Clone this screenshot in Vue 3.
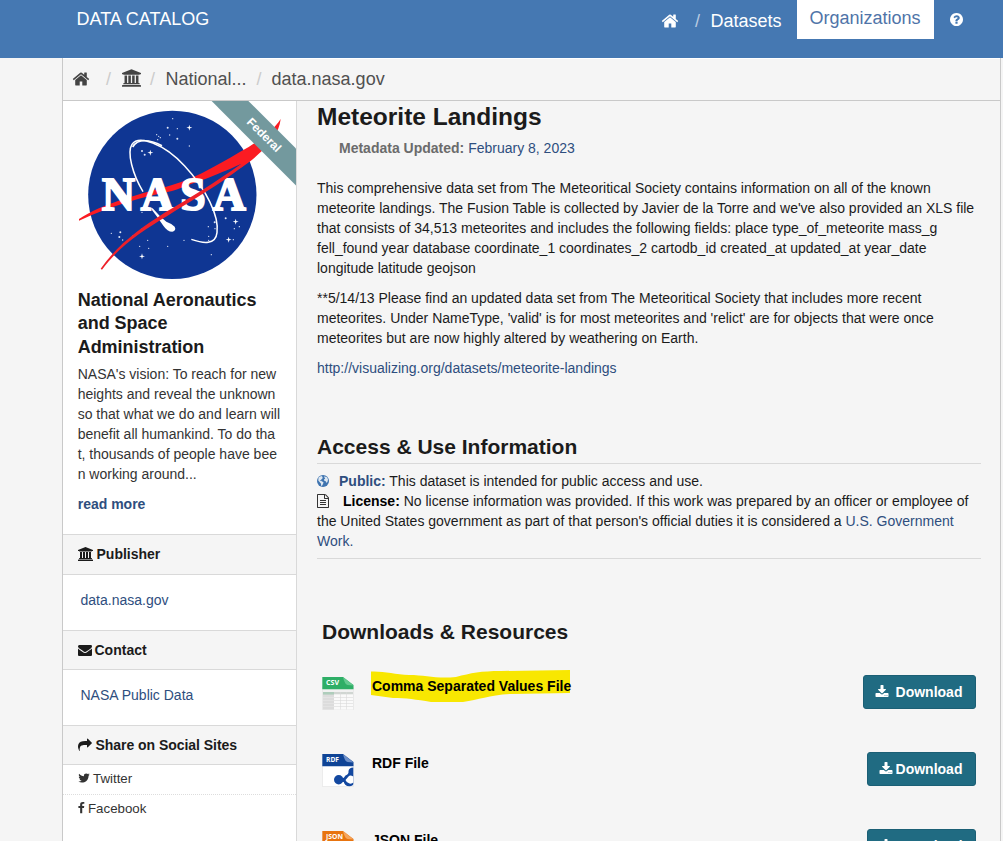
<script setup>
const icons = {
  home: { box: '0 0 1792 1792', d: 'M1472 992v480q0 26-19 45t-45 19h-384v-384h-256v384h-384q-26 0-45-19t-19-45v-480q0-1 .5-3t.5-3l575-474 575 474q1 2 1 6zm223-69l-62 74q-8 9-21 11h-3q-13 0-21-7l-692-577-692 577q-12 8-24 7-13-2-21-11l-62-74q-8-10-7-23.5t11-21.5l719-599q32-26 76-26t76 26l244 204v-195q0-14 9-23t23-9h192q14 0 23 9t9 23v408l219 182q10 8 11 21.5t-7 23.5z' },
  bank: { box: '0 0 1920 1792', d: 'M960 0l960 384v128h-128q0 26-20.5 45t-48.5 19h-1526q-28 0-48.5-19t-20.5-45h-128v-128zm-704 640h256v768h128v-768h256v768h128v-768h256v768h128v-768h256v768h59q28 0 48.5 19t20.5 45v64h-1664v-64q0-26 20.5-45t48.5-19h59v-768zm1595 960q28 0 48.5 19t20.5 45v128h-1920v-128q0-26 20.5-45t48.5-19h1782z' },
  download: { box: '0 0 1792 1792', d: 'M1344 1344q0-26-19-45t-45-19-45 19-19 45 19 45 45 19 45-19 19-45zm256 0q0-26-19-45t-45-19-45 19-19 45 19 45 45 19 45-19 19-45zm128-224v320q0 40-28 68t-68 28h-1472q-40 0-68-28t-28-68v-320q0-40 28-68t68-28h465l135 136q58 56 136 56t136-56l136-136h464q40 0 68 28t28 68zm-325-569q17 41-14 70l-448 448q-18 19-45 19t-45-19l-448-448q-31-29-14-70 17-39 59-39h256v-448q0-26 19-45t45-19h256q26 0 45 19t19 45v448h256q42 0 59 39z' },
  mail: { box: '0 0 1792 1792', d: 'M1792 710v794q0 66-47 113t-113 47h-1472q-66 0-113-47t-47-113v-794q44 49 101 87 362 246 497 345 57 42 92.500 65.500t94.500 48 110 24.500h2q51 0 110-24.500t94.500-48 92.500-65.500q170-123 498-345 57-39 100-87zm0-294q0 79-49 151t-122 123q-376 261-468 325-10 7-42.500 30.500t-54 38-52 32.500-57.500 27-50 9h-2q-23 0-50-9t-57.500-27-52-32.500-54-38-42.500-30.500q-91-64-262-182.500t-205-142.500q-62-42-117-115.500t-55-136.500q0-78 41.500-130t118.500-52h1472q65 0 112.500 47t47.500 113z' },
  share: { box: '0 0 1792 1792', d: 'M1792 640q0 26-19 45l-512 512q-19 19-45 19t-45-19-19-45v-256h-224q-98 0-175.500 6t-154 21.500-133 42.500-105.500 69.500-80 101-48.500 138.500-17.500 181q0 55 5 123 0 6 2.500 23.500t2.500 26.500q0 15-8.500 25t-23.500 10q-16 0-28-17-7-9-13-22t-13.500-30-10.500-24q-127-285-127-451 0-199 53-333 162-403 875-403h224v-256q0-26 19-45t45-19 45 19l512 512q19 19 19 45z' },
  twitter: { box: '60 0 1664 1792', d: 'M1684 408q-67 98-162 167 1 14 1 42 0 130-38 259.500t-115.500 248.500-184.500 210.500-258 146-323 54.500q-271 0-496-145 35 4 78 4 225 0 401-138-105-2-188-64.500t-114-159.500q33 5 61 5 43 0 85-11-112-23-185.500-111.500t-73.500-205.500v-4q68 38 146 41-66-44-105-115t-39-154q0-88 44-163 121 149 294.500 238.500t371.500 99.500q-8-38-8-74 0-134 94.500-228.500t228.500-94.500q140 0 236 102 109-21 205-78-37 115-142 178 93-10 186-50z' },
  facebook: { box: '420 0 1024 1792', d: 'M1343 12v264h-157q-86 0-116 36t-30 108v189h293l-39 296h-254v759h-306v-759h-255v-296h255v-218q0-186 104-288.500t277-102.500q147 0 228 12z' },
  help: { box: '128 128 1536 1536', d: 'M1024 1376v-192q0-14-9-23t-23-9h-192q-14 0-23 9t-9 23v192q0 14 9 23t23 9h192q14 0 23-9t9-23zm256-672q0-88-55.500-163t-138.500-116-170-41q-243 0-371 213-15 24 8 42l132 100q7 6 19 6 16 0 25-12 53-68 86-92 34-24 86-24 48 0 85.500 26t37.500 59q0 38-20 61t-68 45q-63 28-115.500 86.500t-52.500 125.500v36q0 14 9 23t23 9h192q14 0 23-9t9-23q0-19 21.500-49.500t54.500-49.500q32-18 49-28.500t46-35 44.500-48 28-60.500 12.500-81zm384 192q0 209-103 385.500t-279.500 279.500-385.500 103-385.500-103-279.500-279.500-103-385.500 103-385.500 279.500-279.500 385.500-103 385.500 103 279.500 279.500 103 385.500z' },
  file: { box: '128 0 1536 1792', d: 'M1596 380q28 28 48 76t20 88v1152q0 40-28 68t-68 28h-1344q-40 0-68-28t-28-68v-1600q0-40 28-68t68-28h896q40 0 88 20t76 48zm-444-244v376h376q-10-29-22-41l-313-313q-12-12-41-22zm384 1528v-1024h-416q-40 0-68-28t-28-68v-416h-768v1536h1280zm-1024-864q0-14 9-23t23-9h704q14 0 23 9t9 23v64q0 14-9 23t-23 9h-704q-14 0-23-9t-9-23v-64zm736 224q14 0 23 9t9 23v64q0 14-9 23t-23 9h-704q-14 0-23-9t-9-23v-64q0-14 9-23t23-9h704zm0 256q14 0 23 9t9 23v64q0 14-9 23t-23 9h-704q-14 0-23-9t-9-23v-64q0-14 9-23t23-9h704z' },
}

const stars = [
  [332, 71, 2], [317, 98, 3], [346, 101, 2], [323, 120, 2], [346, 131, 3], [284, 119, 2], [290, 124, 2], [295, 128, 2],
  [287, 134, 2], [382, 153, 2], [240, 168, 3], [248, 179, 3], [148, 415, 2], [175, 412, 3], [172, 426, 3], [182, 435, 2],
  [214, 424, 3], [241, 401, 2], [257, 436, 2], [233, 454, 2], [260, 460, 2], [317, 454, 2], [366, 436, 2], [439, 395, 2],
  [440, 424, 2], [440, 436, 2], [458, 382, 3], [459, 401, 2], [491, 370, 3], [517, 401, 2], [532, 395, 2], [514, 434, 2],
  [448, 479, 2], [240, 352, 2], [362, 326, 2],
]
const sparkles = [[382, 98], [265, 173], [521, 380], [500, 434], [240, 484]]

const resources = [
  { kind: 'CSV', color: '#2eae66', fold: '#63c98f', name: 'Comma Separated Values File', marked: true },
  { kind: 'RDF', color: '#0f4496', fold: '#6d8fc8', name: 'RDF File' },
  { kind: 'JSON', color: '#e8740f', fold: '#f5a55c', name: 'JSON File' },
]
</script>

<template>
  <div class="page">
    <header class="top">
      <div class="brand">DATA CATALOG</div>
      <nav class="nav">
        <svg class="nav-home" :viewBox="icons.home.box"><path :d="icons.home.d" /></svg>
        <span class="nav-sep">/</span>
        <a class="nav-link">Datasets</a>
        <a class="nav-active">Organizations</a>
        <svg class="nav-help" :viewBox="icons.help.box"><path :d="icons.help.d" /></svg>
      </nav>
    </header>

    <div class="shell">
      <div class="crumbs">
        <svg class="crumb-home" :viewBox="icons.home.box"><path :d="icons.home.d" /></svg>
        <i class="s1">/</i>
        <svg class="crumb-bank" :viewBox="icons.bank.box"><path :d="icons.bank.d" /></svg>
        <i class="s2">/</i>
        <span>National...</span>
        <i class="s3">/</i>
        <span>data.nasa.gov</span>
      </div>

      <div class="cols">
        <aside class="side">
          <div class="logo">
            <svg viewBox="3 18 699 552" class="nasa">
              <circle cx="331" cy="299.500" r="252.500" fill="#0f3693" />
              <circle v-for="(s, i) in stars" :key="i" :cx="s[0]" :cy="s[1]" :r="s[2]" fill="#dfe6f6" />
              <path v-for="(s, i) in sparkles" :key="'k' + i" :transform="`translate(${s[0]} ${s[1]})`" d="M0-9L2-2L9 0L2 2L0 9L-2 2L-9 0L-2-2Z" fill="#fff" />
              <path d="M51 372C120 325 240 296 330 270C410 248 490 195 560 156C600 132 635 105 656 72C651 112 628 145 592 175C570 196 550 210 530 223L537 207C500 224 460 240 430 252C400 262 370 275 330 288C240 306 150 332 51 377Z" fill="#fb1b22" />
              <g class="nasa-word"><text y="345.500" x="120 236 355 452">NASA</text></g>
              <path d="M243 290C212 238 194 172 210 148C230 120 304 144 368 213C434 284 472 364 465 413C461 450 425 446 388 433" fill="none" stroke="#fff" stroke-width="4.500" />
              <path d="M212 156C228 129 264 134 300 152" fill="none" stroke="#fff" stroke-width="5" />
              <path d="M266 340Q286 366 304 392Q316 410 331 410Q344 406 338 395Q330 386 313 380Q292 364 272 340Z" fill="#fff" />
              <path d="M116 521C170 445 235 400 310 352C390 305 460 262 537 207L545 212C470 270 395 312 317 362C240 408 175 450 120 524Z" fill="#ee2029" />
            </svg>
            <div class="ribbon">Federal</div>
          </div>
          <div class="org">
            <h1>National Aeronautics<br>and Space<br>Administration</h1>
            <p>NASA's vision: To reach for new<br>heights and reveal the unknown<br>so that what we do and learn will<br>benefit all humankind. To do tha<br>t, thousands of people have bee<br>n working around...</p>
            <a>read more</a>
          </div>
          <h2 class="band first"><svg class="i-bank" :viewBox="icons.bank.box"><path :d="icons.bank.d" /></svg>Publisher</h2>
          <div class="value v1">data.nasa.gov</div>
          <h2 class="band"><svg class="i-mail" :viewBox="icons.mail.box"><path :d="icons.mail.d" /></svg>Contact</h2>
          <div class="value">NASA Public Data</div>
          <h2 class="band"><svg class="i-share" :viewBox="icons.share.box"><path :d="icons.share.d" /></svg><span class="sh">Share on Social Sites</span></h2>
          <div class="social tw"><svg :viewBox="icons.twitter.box"><path :d="icons.twitter.d" /></svg>Twitter</div>
          <div class="social fb"><svg :viewBox="icons.facebook.box"><path :d="icons.facebook.d" /></svg>Facebook</div>
        </aside>

        <main class="main">
          <h1 class="title">Meteorite Landings</h1>
          <div class="meta"><b>Metadata Updated:</b> <a>February 8, 2023</a></div>
          <p class="p1">This comprehensive data set from The Meteoritical Society contains information on all of the known<br>meteorite landings. The Fusion Table is collected by Javier de la Torre and we've also provided an XLS file<br>that consists of 34,513 meteorites and includes the following fields: place type_of_meteorite mass_g<br>fell_found year database coordinate_1 coordinates_2 cartodb_id created_at updated_at year_date<br>longitude latitude geojson</p>
          <p>**5/14/13 Please find an updated data set from The Meteoritical Society that includes more recent<br>meteorites. Under NameType, 'valid' is for most meteorites and 'relict' are for objects that were once<br>meteorites but are now highly altered by weathering on Earth.</p>
          <p><a>http://visualizing.org/datasets/meteorite-landings</a></p>

          <h2 class="access-title">Access &amp; Use Information</h2>
          <div class="access">
            <div>
              <svg class="globe" viewBox="0 0 12 12">
                <circle cx="6" cy="6" r="6" fill="#3f74b0" />
                <path d="M1.500 2.600L3.700 1.200L5.500 1.100L4.800 2L5.900 2.500L5.200 3.700L4.100 4.400L4.500 5.300L3.200 4.900L2.800 5.600L4.300 6.100L6.500 7.200L6.100 8.700L4.900 10.900L4.200 10.700L3.900 8.500L2.800 7.200L1.300 5.400ZM7.200 1.200L10 2.300L11 4.200L10.700 6.200L9.700 7.900L8.700 6.200L7.300 5.700L7 4.400L8.200 3.600L7.400 2.600Z" fill="#dfe8f1" />
              </svg><b class="pub">Public:</b> This dataset is intended for public access and use.
            </div>
            <div><svg class="doc" :viewBox="icons.file.box"><path :d="icons.file.d" /></svg><b class="lic">License:</b> No license information was provided. If this work was prepared by an officer or employee of<br>the United States government as part of that person's official duties it is considered a <a>U.S. Government<br>Work.</a></div>
          </div>

          <h2 class="dl-title">Downloads &amp; Resources</h2>
          <ul class="list">
            <li v-for="r in resources" :key="r.kind">
              <svg class="ficon" viewBox="0 0 32 34">
                <path d="M.5 10H31.500V32.500H.5Z" :fill="r.kind === 'CSV' ? '#f1f1f1' : '#fff'" stroke="#e2e2e2" stroke-width=".6" />
                <g v-if="r.kind === 'CSV'">
                  <path d="M1 15H12V32.500H1Z" fill="#dcdcdc" />
                  <path d="M1 15H31V17.500H1Z" fill="#d0d6d2" />
                  <path d="M1 15H12V17.500H1Z" fill="#aecdbb" />
                  <path d="M1 20.500H12M1 23.500H12M1 26.500H12M1 29.500H12" stroke="#e8e8e8" stroke-width=".6" />
                  <path d="M12 17.500H31V32.500H12Z" fill="#fafafa" />
                  <path d="M12 20.500H31M12 23.500H31M12 26.500H31M12 29.500H31M18.500 15V32.500M24.500 15V32.500" stroke="#dadada" stroke-width=".6" />
                </g>
                <g v-if="r.kind === 'RDF'">
                  <path d="M16.500 25.800Q21 25.500 27 26.500" stroke="#1348a0" stroke-width="4" fill="none" />
                  <circle cx="16.700" cy="25.700" r="4.700" fill="#1348a0" />
                  <path d="M31.300 13.500Q27 13.500 26.500 17Q27 20 23.500 21.500Q21.500 23 21.500 26.500Q22 32.300 27.500 32.300Q31 32 31.300 30Z" fill="#1348a0" />
                  <path d="M31.300 22.500Q28 20.500 26.500 22.500L23.500 26Q24.500 29 27.500 29.500Q30 30 31.300 28.500Z" fill="#fff" />
                </g>
                <path d="M.3 0H21L31.500 8V12.300H.3Z" :fill="r.color" />
                <path d="M21 0L31.500 8.500L25.500 8Q22.500 7 21 0Z" :fill="r.fold" />
                <text class="kind" x="4" y="8.300" :textLength="r.kind === 'JSON' ? 17 : 13" lengthAdjust="spacingAndGlyphs">{{ r.kind }}</text>
              </svg>
              <div class="name">
                <svg v-if="r.marked" class="marker" viewBox="0 0 199 32"><path d="M0 1.500C12 .8 24 4.500 38 5C55 5 65 9 85 7C100 3 110 1 130 1L199 0V23L140 24C118 25 108 30 92 32H60C45 29.500 35 28 22 28L0 25Z" fill="#f8e701" /></svg>
                <span>{{ r.name }}</span>
              </div>
              <a class="btn" :class="{ wide: r.marked }"><svg :viewBox="icons.download.box"><path :d="icons.download.d" /></svg>Download</a>
            </li>
          </ul>
        </main>
      </div>
    </div>
  </div>
</template>

<style>
body { margin: 0; background: #f5f5f5; overflow: hidden; }
</style>

<style scoped>
* { box-sizing: border-box; }
h1, h2, p, ul { margin: 0; padding: 0; }
svg { display: block; flex: none; fill: currentColor; }
a { color: #2e4e7e; }
.page { width: 1003px; height: 841px; overflow: hidden; background: #f5f5f5; font: 14px/20px "Liberation Sans", Arial, sans-serif; color: #1b1b1b; white-space: nowrap; }
.top { height: 58px; background: #4578b2; color: #fff; display: flex; justify-content: space-between; align-items: flex-start; font-size: 18px; }
.brand { padding: 9px 0 0 76.500px; line-height: 20px; }
.nav { display: flex; align-items: flex-start; width: 342px; }
.nav-home { width: 18px; height: 18px; margin-top: 12px; }
.nav-sep { margin: 11px 0 0 16px; width: 5px; color: #b9cbe1; }
.nav-link { color: #fff; margin: 11px 0 0 10.500px; width: 86.500px; }
.nav-active { background: #fff; color: #4f74a8; width: 137px; height: 39px; padding: 8px 0 0 12.500px; }
.nav-help { width: 13px; height: 13px; margin: 13px 0 0 15.500px; }
.shell { margin-left: 62px; width: 939px; height: 783px; border: 1px solid #c9c9c9; border-width: 0 1px 0 1px; box-shadow: inset 0 1px #fff; }
.crumbs { height: 43px; border-bottom: 1px solid #c9c9c9; display: flex; align-items: center; font-size: 18px; color: #505050; padding-left: 9px; }
.crumbs i { font-style: normal; color: #ccc; width: 5px; }
.crumb-home { width: 18px; height: 18px; color: #444; }
.crumbs .s1 { margin-left: 16px; }
.crumb-bank { width: 19px; height: 18px; margin: -2px 0 0 11px; color: #444; }
.crumbs .s2 { margin: 0 10.500px 0 9px; }
.crumbs .s3 { margin: 0 10px 0 10px; }
.cols { display: flex; height: 740px; }
.side { width: 234px; background: #fff; border-right: 1px solid #d9d9d9; overflow: hidden; flex: none; }
.logo { position: relative; height: 184px; overflow: hidden; }
.nasa { width: 233px; height: 184px; }
.nasa-word text { font: bold 137px "Liberation Serif", serif; fill: #fff; stroke: #fff; stroke-width: 6px; }
.ribbon { position: absolute; width: 160px; height: 26px; left: 121px; top: 21px; transform: rotate(45deg); background: #73999e; color: #fff; font-weight: bold; font-size: 12px; line-height: 27px; text-align: center; }
.org { height: 249px; padding: 4px 0 0 14.700px; }
.org h1 { font-size: 18px; line-height: 23.4px; letter-spacing: -.03px; }
.org p { margin-top: 5px; color: #333; }
.org a { display: block; margin-top: 10px; font-weight: bold; }
.band { height: 40px; border: 1px solid #d9d9d9; border-width: 1px 0; background: #f5f5f5; font-size: 14px; display: flex; align-items: center; padding-left: 14.500px; }
.band.first { height: 41px; padding-bottom: 1px; }
.i-bank { width: 15px; height: 14px; margin-right: 4px; }
.i-mail { width: 14px; height: 14px; margin-right: 3px; }
.i-share { width: 14px; height: 14px; margin-right: 4px; }
.sh { letter-spacing: -.04px; }
.value { height: 55px; padding: 15px 0 0 17.500px; color: #2e4e7e; }
.social { height: 30px; padding: 4px 0 0 15px; display: flex; color: #333; font-size: 13.300px; }
.social svg { height: 14px; margin-top: 2px; }
.tw { border-bottom: 1px dotted #ddd; }
.tw svg { width: 12px; margin-right: 3px; }
.fb svg { width: 7px; margin-right: 3px; }
.main { padding-left: 20px; width: 684px; }
.title { font-size: 24.5px; line-height: 32px; }
.meta { padding-left: 22px; margin-top: 5px; }
.meta b { color: #6b6b6b; }
.main p { margin-bottom: 10px; }
.main .p1 { margin-top: 20px; }
.access-title { font-size: 21px; line-height: 32px; margin-top: 53px; height: 32px; }
.access { border: 1px solid #d9d9d9; border-width: 1px 0; height: 96px; padding-top: 7px; }
.access svg { display: inline-block; vertical-align: -2px; }
.access .globe { width: 12px; height: 12px; vertical-align: -1px; }
.doc { width: 12px; height: 14px; color: #333; }
.pub { color: #2e4e7e; margin-left: 10px; }
.lic { color: #000; margin-left: 14px; }
.dl-title { font-size: 21px; line-height: 30px; margin: 58px 0 0 5px; }
.list { list-style: none; margin-top: 28px; }
.list li { height: 77px; display: flex; padding-left: 5px; }
.ficon { width: 32px; height: 34px; margin-top: 2px; }
.kind { font: bold 6.5px "Open Sans", sans-serif; fill: #fff; }
.name { position: relative; flex: 1; margin-left: 18px; font-weight: bold; color: #000; padding-top: 1px; }
.name span { position: relative; }
.marker { position: absolute; left: -1px; top: -5px; width: 199px; height: 32px; }
.btn { width: 109px; height: 34px; margin-right: 5px; border-radius: 3px; border: 1px solid #1b5f75; background: #206b82; color: #fff; font-weight: bold; display: flex; align-items: center; justify-content: center; padding-right: 2px; }
.btn svg { width: 14px; height: 14px; margin-right: 3px; }
.btn.wide { width: 113px; }
.btn.wide svg { margin-right: 7px; }
</style>
